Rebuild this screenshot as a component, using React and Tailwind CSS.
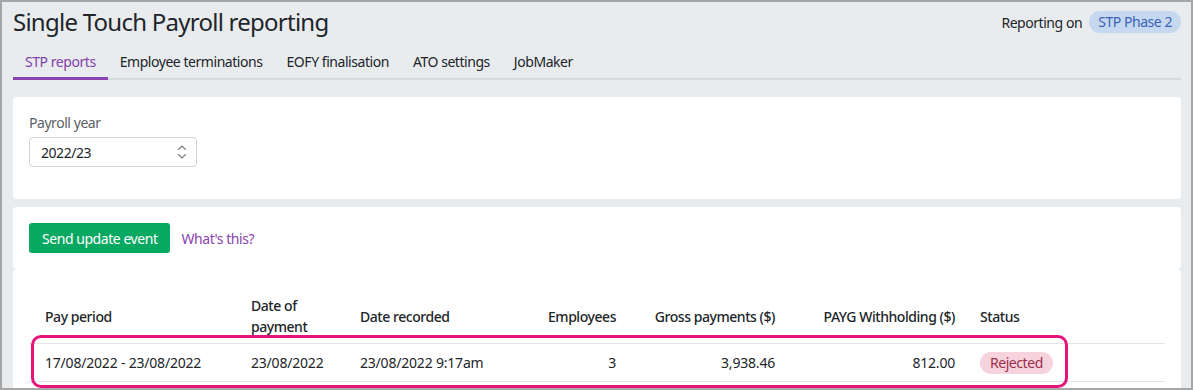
import React from 'react';

const font = { fontFamily: '"Noto Sans", "Open Sans", sans-serif' };

const tabs = ['STP reports', 'Employee terminations', 'EOFY finalisation', 'ATO settings', 'JobMaker'];

const SelectArrows = () => (
  <svg width="10" height="16" viewBox="0 0 10 16" fill="none" stroke="#7a8087" strokeWidth="1.1" strokeLinecap="round" strokeLinejoin="round">
    <path d="M1.5 5.5 L5 2 L8.5 5.5" />
    <path d="M1.5 10.5 L5 14 L8.5 10.5" />
  </svg>
);

const App = () => {
  return (
    <div
      className="w-[1193px] h-[390px] overflow-hidden border-2 border-[#a6a6a6] bg-[#e9ecef] pl-[11px] pr-[10px] text-[#212529] tracking-[-0.45px]"
      style={font}
    >
      {/* Header */}
      <div className="flex items-center justify-between pt-[4px]">
        <h1 className="text-[24px] leading-8 font-normal tracking-[-0.75px]">Single Touch Payroll reporting</h1>
        <div className="flex items-center gap-[7px] text-[14px]">
          <span>Reporting on</span>
          <span className="rounded-full bg-[#c6d7f0] px-[9px] leading-[22px] text-[#3a64b8]">STP Phase 2</span>
        </div>
      </div>

      {/* Tabs */}
      <div className="flex border-b-2 border-[#d6d9dd]">
        {tabs.map((t, i) => (
          <div
            key={t}
            className={
              i === 0
                ? 'px-3 pt-[14px] pb-[5px] -mb-[2px] border-b-[3px] border-[#8a44b0] text-[14px] leading-5 text-[#8241aa]'
                : 'px-3 pt-[14px] pb-[5px] -mb-[2px] border-b-[3px] border-transparent text-[14px] leading-5'
            }
          >
            {t}
          </div>
        ))}
      </div>

      {/* Payroll year card */}
      <div className="mt-[17px] rounded-[4px] bg-white px-4 pt-4 pb-[32px]">
        <label className="block text-[14px] leading-5 text-[#5a5f66]">Payroll year</label>
        <div className="mt-1 flex h-[30px] w-[168px] items-center justify-between rounded-[4px] border border-[#ced4da] pl-[11px] pr-[9px] text-[14px]">
          <span>2022/23</span>
          <SelectArrows />
        </div>
      </div>

      {/* Actions card */}
      <div className="mt-2 rounded-[4px] bg-white px-4 py-4">
        <div className="flex items-center gap-[11px]">
          <button className="h-[30px] rounded-[3px] bg-[#07a862] px-[13px] text-[14px] text-white">
            Send update event
          </button>
          <span className="text-[14px] text-[#8a44b0]">What's this?</span>
        </div>
      </div>

      {/* Table card */}
      <div className="relative h-[200px] rounded-[4px] bg-white px-4 pt-5">
        <table className="w-[1136px] table-fixed border-collapse text-[14px] leading-[21px]">
          <colgroup>
            <col className="w-[206px]" />
            <col className="w-[109px]" />
            <col className="w-[176px]" />
            <col className="w-[112px]" />
            <col className="w-[159px]" />
            <col className="w-[180px]" />
            <col />
          </colgroup>
          <thead>
            <tr>
              <th className="py-[6px] pl-4 text-left align-middle font-medium">Pay period</th>
              <th className="py-[6px] pl-4 text-left align-middle font-medium">Date of payment</th>
              <th className="py-[6px] pl-4 text-left align-middle font-medium">Date recorded</th>
              <th className="py-[6px] pr-4 text-right align-middle font-medium">Employees</th>
              <th className="py-[6px] pr-4 text-right align-middle font-medium">Gross payments ($)</th>
              <th className="py-[6px] pr-4 text-right align-middle font-medium">PAYG Withholding ($)</th>
              <th className="py-[6px] pl-[9px] text-left align-middle font-medium">Status</th>
            </tr>
          </thead>
          <tbody className="tracking-[-0.2px]">
            <tr className="border-y border-[#e2e5e8]">
              <td className="h-[38px] pl-4 align-middle">17/08/2022 - 23/08/2022</td>
              <td className="pl-4 align-middle">23/08/2022</td>
              <td className="pl-4 align-middle">23/08/2022 9:17am</td>
              <td className="pr-4 text-right align-middle">3</td>
              <td className="pr-4 text-right align-middle">3,938.46</td>
              <td className="pr-4 text-right align-middle">812.00</td>
              <td className="pl-[9px] align-middle">
                <span className="inline-block rounded-full bg-[#f6d3dd] px-[10px] leading-[22px] text-[#9c2d4c] tracking-[-0.45px]">Rejected</span>
              </td>
            </tr>
          </tbody>
        </table>
        {/* highlight */}
        <div className="absolute left-[18px] top-[66px] h-[53px] w-[1037px] rounded-[10px] border-[3px] border-[#e6137a]" />
      </div>
    </div>
  );
};

export default App;
